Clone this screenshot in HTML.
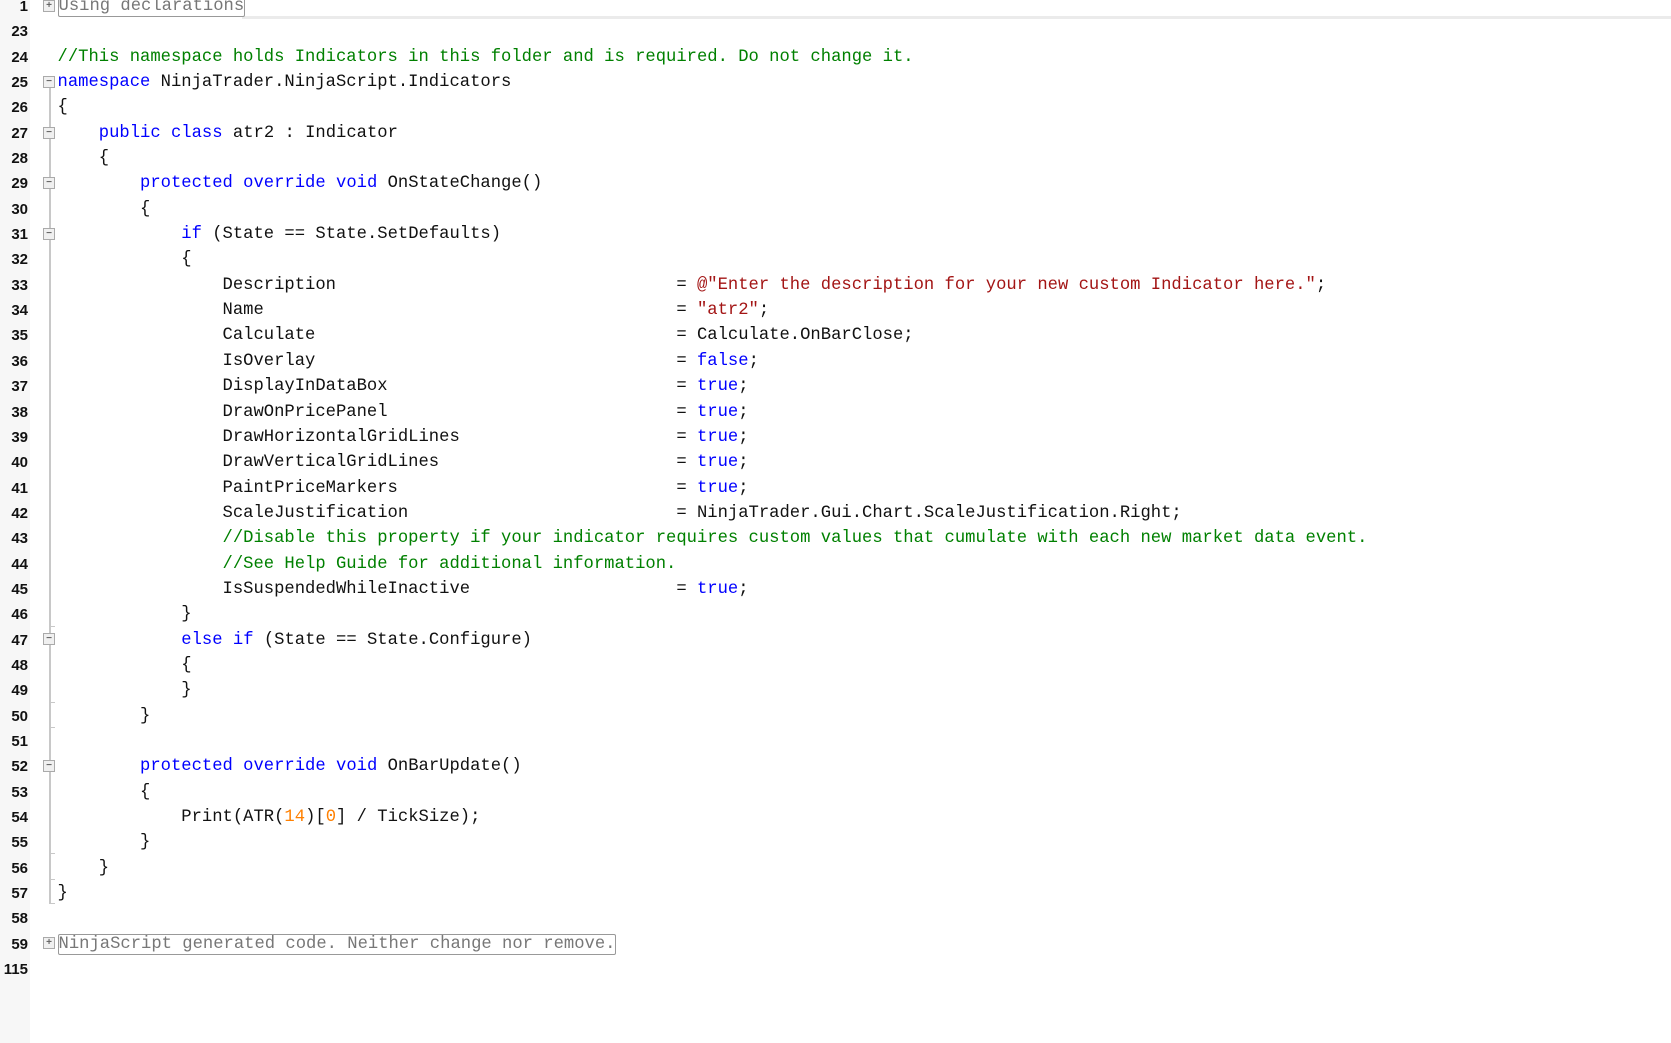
<!DOCTYPE html>
<html><head><meta charset="utf-8"><style>
html,body{margin:0;padding:0;width:1671px;height:1043px;overflow:hidden;background:#fff}
#g{position:absolute;left:0;top:0;width:30px;height:1043px;background:#f7f7f7}
#nums{position:absolute;left:0;top:-6px;width:28px;font:bold 15px/25.35px "Liberation Sans",sans-serif;color:#111;text-align:right}
#code{position:absolute;left:57.5px;top:-6px;margin:0;font:17.2px/25.35px "Liberation Mono",monospace;color:#111;white-space:pre}
.k{color:#0000ff}.m{color:#008000}.s{color:#a31515}.o{color:#ff8000}
.b{position:absolute;left:43px;width:10px;height:10px;border:1px solid #aaa;background:#f0f0f0;font:bold 10px/10px "Liberation Sans",sans-serif;color:#666;text-align:center}
.box{border:1px solid #999;border-radius:2px;color:#777}
.v{position:absolute;left:49px;width:2px;background:#c8c8c8}
.t{position:absolute;left:49px;width:6px;height:1px;background:#c8c8c8}
</style></head><body>
<div id="g"></div>
<div style="position:absolute;left:242px;top:16px;width:1429px;height:3px;background:#ebebeb"></div>
<div class="v" style="top:88px;height:815px"></div>
<div class="t" style="top:626px"></div>
<div class="t" style="top:702px"></div>
<div class="t" style="top:727px"></div>
<div class="t" style="top:853px"></div>
<div class="t" style="top:879px"></div>
<div class="t" style="top:903px"></div>
<div class="b" style="top:0px">+</div>
<div class="b" style="top:76px">&minus;</div>
<div class="b" style="top:127px">&minus;</div>
<div class="b" style="top:177px">&minus;</div>
<div class="b" style="top:228px">&minus;</div>
<div class="b" style="top:633px">&minus;</div>
<div class="b" style="top:760px">&minus;</div>
<div class="b" style="top:937px">+</div>
<div id="nums">1<br>23<br>24<br>25<br>26<br>27<br>28<br>29<br>30<br>31<br>32<br>33<br>34<br>35<br>36<br>37<br>38<br>39<br>40<br>41<br>42<br>43<br>44<br>45<br>46<br>47<br>48<br>49<br>50<br>51<br>52<br>53<br>54<br>55<br>56<br>57<br>58<br>59<br>115</div>
<pre id="code"><span class="box">Using declarations</span>

<span class="m">//This namespace holds Indicators in this folder and is required. Do not change it.</span>
<span class="k">namespace</span> NinjaTrader.NinjaScript.Indicators
{
    <span class="k">public</span> <span class="k">class</span> atr2 : Indicator
    {
        <span class="k">protected</span> <span class="k">override</span> <span class="k">void</span> OnStateChange()
        {
            <span class="k">if</span> (State == State.SetDefaults)
            {
                Description                                 = <span class="s">@"Enter the description for your new custom Indicator here."</span>;
                Name                                        = <span class="s">"atr2"</span>;
                Calculate                                   = Calculate.OnBarClose;
                IsOverlay                                   = <span class="k">false</span>;
                DisplayInDataBox                            = <span class="k">true</span>;
                DrawOnPricePanel                            = <span class="k">true</span>;
                DrawHorizontalGridLines                     = <span class="k">true</span>;
                DrawVerticalGridLines                       = <span class="k">true</span>;
                PaintPriceMarkers                           = <span class="k">true</span>;
                ScaleJustification                          = NinjaTrader.Gui.Chart.ScaleJustification.Right;
                <span class="m">//Disable this property if your indicator requires custom values that cumulate with each new market data event.</span>
                <span class="m">//See Help Guide for additional information.</span>
                IsSuspendedWhileInactive                    = <span class="k">true</span>;
            }
            <span class="k">else</span> <span class="k">if</span> (State == State.Configure)
            {
            }
        }

        <span class="k">protected</span> <span class="k">override</span> <span class="k">void</span> OnBarUpdate()
        {
            Print(ATR(<span class="o">14</span>)[<span class="o">0</span>] / TickSize);
        }
    }
}

<span class="box">NinjaScript generated code. Neither change nor remove.</span>
</pre>
</body></html>
